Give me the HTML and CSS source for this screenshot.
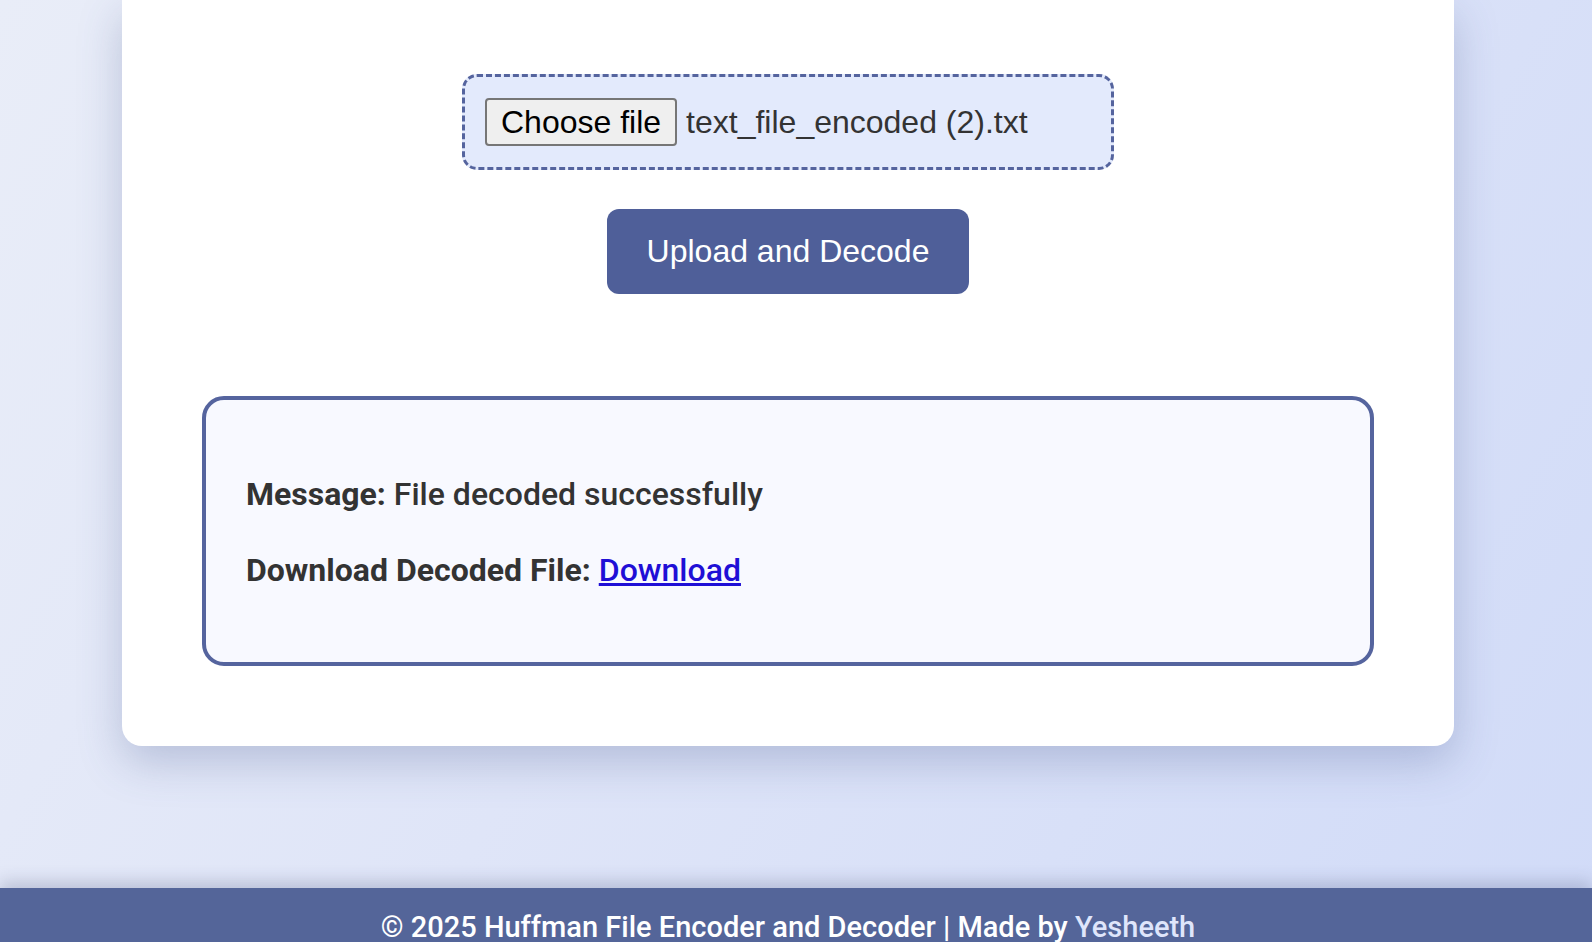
FILE: index.html
```html
<!DOCTYPE html>
<html lang="en">
<head>
<meta charset="utf-8">
<title>Huffman File Encoder and Decoder</title>
<link rel="stylesheet" href="styles.css">
</head>
<body>
<div class="page">
  <main class="main">
    <section class="card">
      <form class="upload-form">
        <div class="file-drop">
          <div class="file-input">
            <span class="file-btn">Choose file</span>
            <span class="file-name">text_file_encoded (2).txt</span>
          </div>
        </div>
        <button type="button" class="submit-btn">Upload and Decode</button>
      </form>
      <div class="result">
        <p class="result-line"><strong>Message:</strong> File decoded successfully</p>
        <p class="result-line"><strong>Download Decoded File:</strong> <a href="#" class="dl-link">Download</a></p>
      </div>
    </section>
  </main>
  <footer class="footer">
    <p class="footer-text">© 2025 Huffman File Encoder and Decoder | Made by <span class="author">Yesheeth</span></p>
  </footer>
</div>
</body>
</html>
```
FILE: styles.css
```css
html, body {
  margin: 0;
  padding: 0;
  height: 942px;
  overflow: hidden;
}

body {
  background: linear-gradient(120deg, #e9edf8 0%, #dfe5f8 45%, #d1dbf8 100%);
  font-family: Roboto, "Liberation Sans", Arial, sans-serif;
  color: #333;
}

.page {
  height: 942px;
  display: flex;
  flex-direction: column;
}

.main {
  flex: 1;
  display: flex;
  justify-content: center;
  align-items: flex-start;
  padding-right: 16px;
}

.card {
  width: 1332px;
  box-sizing: border-box;
  background: #ffffff;
  border-radius: 0 0 20px 20px;
  padding: 74px 80px 80px;
  box-shadow: 0 16px 44px rgba(70, 85, 140, 0.28);
  display: flex;
  flex-direction: column;
}

.upload-form {
  display: flex;
  flex-direction: column;
  align-items: center;
  gap: 39px;
}

.file-drop {
  width: 652px;
  height: 96px;
  box-sizing: border-box;
  border: 3.5px dashed #55649e;
  border-radius: 15px;
  background: #e3eafc;
  padding: 20px;
  display: flex;
  align-items: center;
}

.file-input {
  display: flex;
  align-items: center;
  font-family: "Liberation Sans", Arial, sans-serif;
  font-size: 32px;
}

.file-btn {
  display: inline-flex;
  align-items: center;
  height: 48px;
  box-sizing: border-box;
  padding: 0 14px;
  background: #efefef;
  border: 2px solid #767676;
  border-radius: 4px;
  color: #000;
  margin-right: 9px;
}

.file-name {
  color: #333;
}

.submit-btn {
  font-family: "Liberation Sans", Arial, sans-serif;
  font-size: 32px;
  color: #fff;
  background: #4f5f99;
  border: 0;
  border-radius: 12px;
  width: 362px;
  height: 85px;
  padding: 0;
  cursor: pointer;
}

.result {
  margin-top: 102px;
  border: 4px solid #55649e;
  border-radius: 22px;
  background: #f8f9ff;
  padding: 40px 40px 38px;
}

.result-line {
  margin: 32px 0;
  font-size: 32px;
  font-weight: 500;
  line-height: 44px;
  color: #333;
}

.result-line strong {
  font-weight: 700;
}

.dl-link {
  color: #1f0fd6;
  text-decoration: underline;
}

.footer {
  height: 54px;
  flex: none;
  overflow: hidden;
  background: #546599;
  box-shadow: 0 -6px 16px rgba(40, 50, 90, 0.22);
  padding-right: 16px;
  text-align: center;
  color: #fff;
}

.footer-text {
  margin: 20px 0 0;
  font-size: 29px;
  font-weight: 500;
  line-height: 38px;
}

.author {
  color: #dfe5fb;
}
```
